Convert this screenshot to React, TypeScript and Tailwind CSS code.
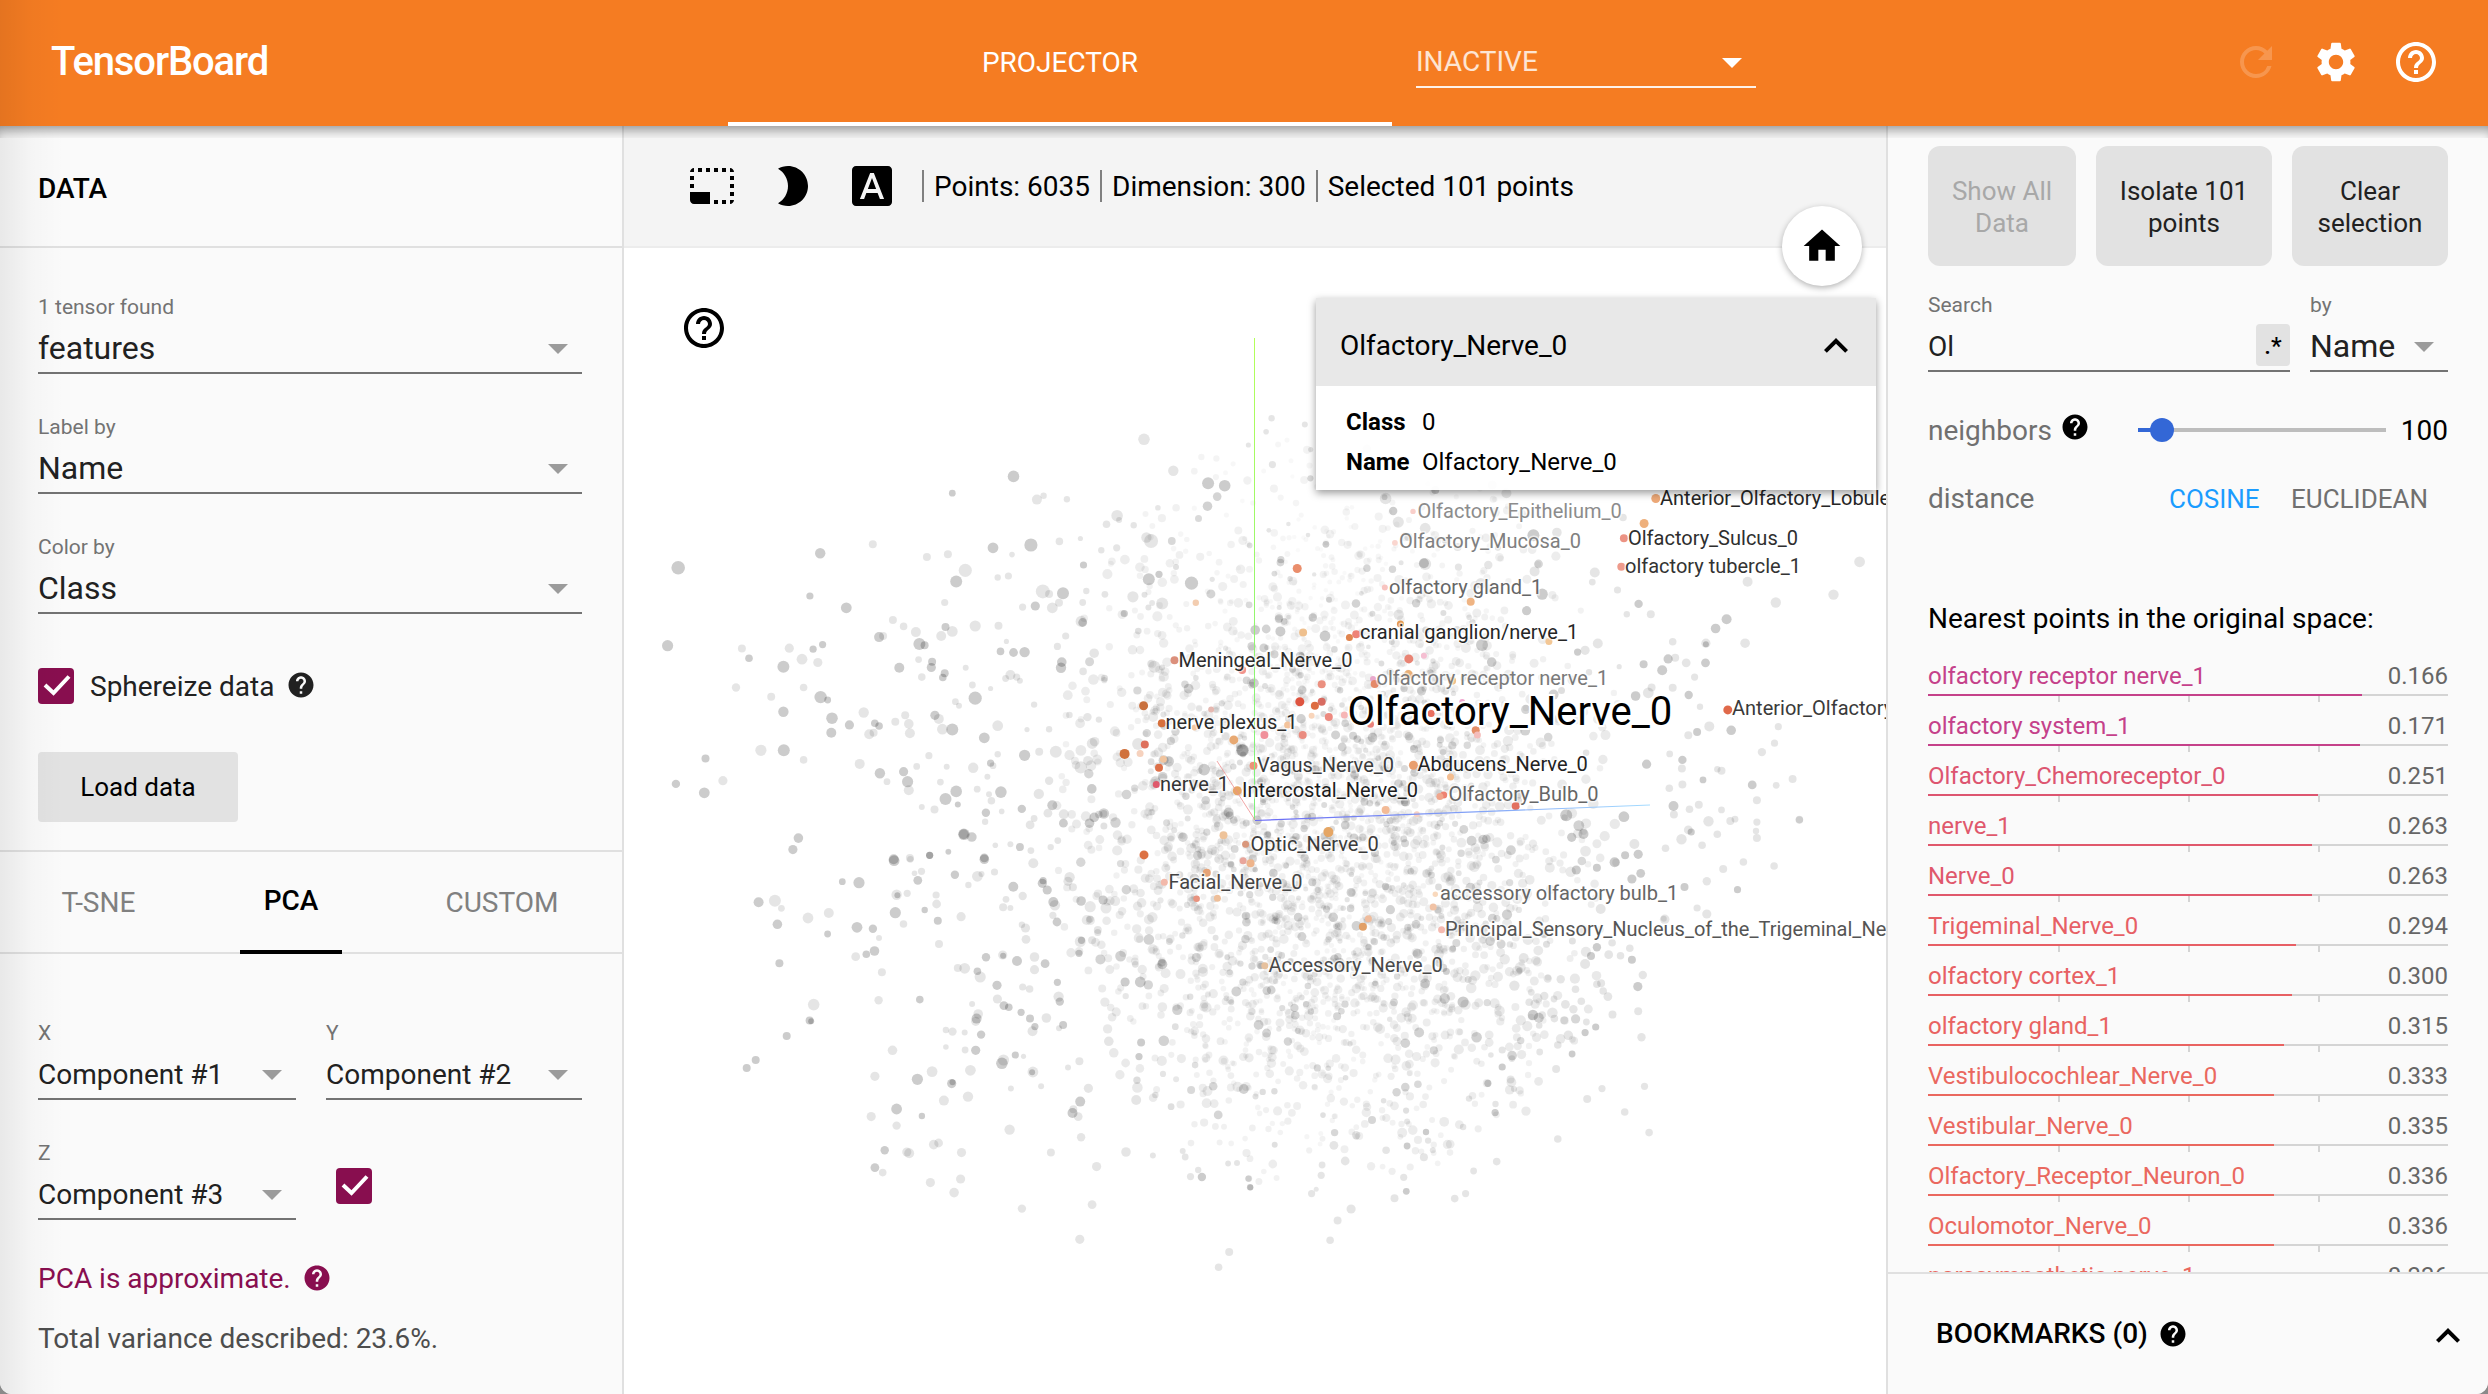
import React from "react";
import {
  MdRefresh,
  MdSettings,
  MdHelpOutline,
  MdHelp,
  MdHome,
  MdExpandLess,
  MdPhotoSizeSelectSmall,
  MdBrightness2,
  MdFontDownload,
} from "react-icons/md";

type Dot = { x: number; y: number; r: number; fill: string; o: number };
type Tile = { ox: number; oy: number; sx: number; sy: number };

const TILE_A: Tile = { ox: 630, oy: 300, sx: 0.3954, sy: 0.3571 };
const TILE_B: Tile = { ox: 630, oy: 830, sx: 0.4082, sy: 0.3333 };
const TILE_C: Tile = { ox: 1240, oy: 280, sx: 0.4209, sy: 0.3571 };
const TILE_D: Tile = { ox: 1240, oy: 800, sx: 0.4209, sy: 0.3333 };

/* Sparse outer points, "x y r" triples; an upper-case D marks the darker ones. */
const grayA =
  "122 750 6.8D,95 968 5.6D,481 709 5.2D,614 684 4,455 829 3.6D,547 862 5.4D,815 541 3.4D,970 494 5.8D,1029 559 5,1046 548 3.2,1105 558 3.2,1014 686 6.6D,918 694 5.4D,1086 676 3.8,966 713 2.8,804 712 4,751 720 4,848 757 6.6,825 788 6D,930 777 3.2,957 773 3.6,796 847 3.6,1044 816 7,1060 823 4,1095 821 6D,1068 862 5.4,1085 848 4,1025 857 4.6D,993 860 3.6,665 896 4,692 914 3.8,723 930 5,787 941 5,815 928 5.4,798 916 4D,873 913 5.6,932 912 4,630 944 5D,640 941 4,732 963 6D,745 967 4D,283 976 4,301 1003 3.8D,403 975 4.6,435 1006 5.4,463 978 3.6D,487 965 3.6D,475 1015 4.6,388 1027 6D,681 1030 5D,730 1007 3.4,764 1013 4D,762 1029 4.6D,738 1056 3.8,796 1045 4D,791 1057 3.8D,849 1030 3,937 984 3.8D,970 987 4.4D,998 986 5.2D,952 956 2.6,268 1085 4.2,357 1111 4,439 1085 3.8,482 1112 6.2D,500 1120 3.4D,388 1153 5.2D,866 1078 3.4,873 1115 6.6D,912 1088 2.6,823 1125 3.4,832 1136 3,962 1050 5,978 1056 3.6,950 1060 3.4,986 1066 3,511 1171 5.8D,555 1190 4.6D,509 1212 5D,591 1155 5.2,619 1185 3.8D,630 1193 3.8D,605 1216 5,616 1212 4,671 1181 4,696 1163 4,705 1187 4.8,708 1213 5,771 1163 4.6D,781 1173 5,790 1202 5.4,815 1203 6D,930 1192 5.4,896 1226 5.4D,331 1261 5.6,389 1261 6D,191 1284 4D,439 1288 3.8,581 1299 5,756 1276 3.6,998 1275 5.6D,930 1272 3.2,235 1346 4.6,116 1355 4.2D,188 1380 5.4D,632 1325 5.2D,692 1321 4.6D,702 1349 5.6D,705 1373 5,650 1349 3.4,725 1306 3.4,801 1307 3,868 1310 5.2,912 1297 3.6D,918 1304 3.4,904 1335 3,785 1350 3.4,798 1397 6D,825 1376 5.8D,829 1413 3D,938 1378 5.8D,908 1384 3,878 1370 3.4,914 1402 3.8,770 1427 4,738 1420 3,900 1436 4.2D,991 1425 4.2D,940 1432 2.8,898 1461 3.2,844 1496 5D,864 1504 5,426 1507 4.8D,412 1539 4.6D,667 1566 5D,708 1563 4,758 1555 3.6D,896 1562 4.4D,805 1545 3,924 1527 2.8,962 1524 3,986 1532 4D,1014 1542 3.4,1012 1470 4.4,1022 1452 3.4,1057 1437 4.4,1068 1415 5D,1097 1440 5,1096 1465 4.4D,1034 1383 5.2,1060 1346 4.2,1077 1265 6,1035 1265 4,1022 1133 3.2,1004 1203 2.6,1060 1202 3.2,1082 1514 3.4,1064 1532 3.2,1300 390 5.8,1374 478 5.2,1462 513 6D,1504 520 5.8D,1232 604 5.8,1237 616 3,1205 628 3.8,1274 631 3.2,1192 701 3.2,1231 694 3.6,1139 668 2.6,1147 742 3.6D,1318 675 7,1306 665 5.2,1312 782 6D,1338 768 3.6D,1272 831 5.6,1346 850 6,1420 793 6.6D,1141 900 5.6,1145 903 4.4D,1154 815 3.2,1145 847 3.4,1201 824 3.4,1174 989 4.8,1146 1040 3.8,1092 1014 4.8D,1090 1030 5.2D,1081 970 3.6,1102 941 3.6,1157 1168 4.2,1186 1175 3.2,1175 1237 4.8,1169 1242 5.4,1158 1290 4.8,1140 1309 6.2,1168 1369 4.8D,1174 1449 4.8D,1162 1465 4.8D,1285 1243 6,1250 878 3.6D,1326 1027 6,1452 1315 5.8D,1549 1261 5.8D";
const grayB =
  "818 13 5.8D,838 21 4.6,315 217 5D,355 212 6,371 235 3.4,361 283 4.8D,436 264 5.4,487 249 5,484 312 3.4D,366 400 4D,450 524 5.8,440 572 4D,444 574 3D,384 618 4D,308 690 4D,286 714 4D,520 155 3.4D,561 158 5.6D,647 92 5.4D,687 88 3.4,734 76 3.6D,714 124 3.6,697 130 2.8,705 151 4.4D,796 134 4.2D,868 88 4.8D,851 139 5.4,861 132 3,829 165 3.2,893 126 3.6,780 65 2.8,653 194 5.2,655 196 3D,679 190 3.6,650 248 5.6D,670 282 3.8,722 240 3.2D,750 195 3.6,751 222 4.4,754 272 4D,811 260 4.6,556 292 5.4D,595 296 4.2D,610 324 3,757 342 4,553 380 4.4,579 373 3.8D,599 363 4.8D,617 427 4,609 511 4.2,710 509 3.8D,643 661 4.8,600 739 4.6,704 748 5.6D,740 725 5.4,788 761 4.6D,790 757 3D,834 721 5.4,828 800 5.2,769 812 5,653 837 5.4D,591 860 4.6,653 887 4.2,715 858 3.2D,624 961 4.2D,600 1013 4.4D,619 1028 3.8,678 966 4.6,684 970 5,744 944 4.8,756 939 4.4,812 968 4.6,736 1058 4.6,810 1047 4.6,794 1088 4.8,930 899 5.2,1031 968 4,960 1136 4.2,1132 1124 4.4,1102 1228 4.6,1143 1010 4.6,1105 922 4.2,1468 1266 4,1442 1312 3.8,939 170 5D,962 198 4.2,921 208 3.4,914 232 4,932 234 3,1010 160 4.6D,1012 152 3.6D,1022 180 4.6D,1037 216 5D,1041 226 5.2,1046 276 4.4D,1105 213 4.8D,1159 210 4.6D,1036 256 3.6,988 100 5,1077 142 5.2,1073 154 4.6,1085 172 4,1106 331 3.6D,1132 331 4,1146 300 4,872 382 4.2D,913 375 4.6,914 377 3D,948 393 5D,991 381 4.8,991 419 4.6,1017 401 4.4D,820 415 5.4,803 414 4,851 424 3.8D,858 441 5.6,899 466 4.6D,1100 370 3.6D,962 471 3.6,979 477 3.8,1047 457 3.6D,1050 500 5.2,1053 515 4.2D,900 507 4.6,838 522 3,916 527 4.4D,928 532 3.8D,958 547 3.6D,980 566 4D,853 552 4.8,849 566 5D,847 574 4.6,992 590 3.6D,986 604 5,1020 564 4.8,1061 585 4D,1051 595 3,774 600 3.2,790 605 4.2,820 608 3,860 614 4.2D,847 661 4.6D,821 660 3.4,774 651 2.8,911 700 5.8D,915 690 5.6,944 675 3.6D,964 679 2.6,987 726 5.4,985 727 3D,933 776 3,1007 769 3,1073 713 3,1101 694 4,1123 775 4.6,1103 815 5D,1084 849 5D,1086 838 4,1098 860 4.4,1173 634 4.8,1215 966 4.8,1250 456 5.4D,1213 456 4.6D,970 328 4.4,969 294 4.6,960 284 3.2,1304 403 5D,1240 810 5,1401 1041 4.2D,1373 1040 3.6,1392 1020 3.2,1281 977 3,1354 963 3,1360 981 3.4,1520 1073 3,1516 1046 3.4,1487 999 3,1252 638 4D,1247 680 3.6D";
const grayC =
  "1472 789 5.4,1206 845 5,1410 881 5.2,1273 903 5.2,1156 950 5D,1130 976 4.8D,1200 1017 4.8,947 907 4.2D,919 936 3.2,976 936 4,843 819 5,837 846 3.4,897 868 3.6,910 665 3.8,1107 1017 4.6,1107 1020 3D,1028 1013 3.8,1017 1061 4.6D,1034 1058 4,1060 1072 4.4,1106 1072 4.4D,959 1076 4D,1003 1093 5D,901 1083 2.6,1080 1112 3.6,940 1165 4.8D,978 1141 4,970 1156 5.4,1028 1142 4,1066 1162 4.2D,1093 1195 3.2,1115 1250 5,1167 1261 4.8D,1086 1266 4D,1065 1275 4,1279 1251 3.6,1270 1297 3.6,1240 1322 4.2,1313 1397 4,1217 1414 4.4D,1274 1415 3.4,1144 1374 4,1134 1370 3.2,1051 1344 4.2D,1050 1368 4,1021 1327 3.4,966 1356 4.6D,1100 1400 3.4D,1228 1457 4,1329 1511 3.8,1144 1484 3.4,1228 1518 3.6,1176 1510 3.4,1051 1413 4,1020 1423 3.8,1030 1473 5,1031 1497 4,1065 1540 4.4,753 707 4.8,697 715 6D,517 748 4,437 793 5D,440 795 6,700 816 5,718 880 5.6D,346 612 5.8,364 647 4.2D,376 678 5.6,440 695 5.4,633 597 5,464 588 4D,400 720 4,204 740 3.4D,572 850 5.4,681 926 4.6D,377 937 5.2,575 1022 6D,598 1070 4.8D,850 1018 5,820 1037 4.6,802 1042 3.6D,6 1317 6.4D,36 980 4.8D,96 984 5D,202 997 5.4D,173 945 4.2D,75 387 3.2,154 405 3,62 425 2.8,77 517 3.6,168 475 2.6,20 462 2.6,590 798 4.2,519 804 3.6";
const grayD =
  "1030 18 5,1090 14 4,1068 28 3.8,1113 64 5.2,1165 63 4,1226 93 3.2,1228 114 4,1072 96 3.6D,1049 118 5.2,1098 136 3.8,1134 103 3.8,1329 60 3.8,1011 145 3.8,1196 186 3.8,1148 207 4,1269 198 3.8,1109 244 4.2,1182 269 3.6D,1056 261 4D,1086 324 3.6,1109 342 4.6,1009 358 4.8,1007 356 3,946 163 4.6D,915 166 4D,890 187 5D,848 203 4D,799 210 4.6D,952 220 4.4D,931 237 4.6D,857 327 5,884 428 3.8,848 442 4.2D,834 468 4D,931 479 4D,926 445 3.8,904 467 3.8,876 464 4.4,820 492 5,957 525 4.2,945 560 4.6D,731 536 4.2,762 538 4.2,797 568 3.8,848 553 3.8,858 550 4,863 573 3.8,874 590 4.4,811 604 3.8,692 577 3.4,723 588 4.2,687 607 3.8,746 597 3.4,773 613 4.4,792 628 4.2,696 645 5.2D,718 645 3.8,747 656 3.8,770 661 4,885 644 4,946 634 4,823 666 3.4,845 681 3.6D,820 698 3.6D,780 706 4.8,954 712 4.2,755 735 3.8,712 756 3.4,789 762 3.4D,751 807 4,623 750 3.6,646 776 3.4,596 765 2.8,623 801 3.6D,643 839 4,651 867 3,589 850 3.6D,961 859 3.6,860 866 3.6,825 897 4,914 936 3.8,607 912 3.2,606 938 3.6D,755 1017 3.8,972 998 3.8,530 981 3.2,544 896 3.2,610 1085 3.8,555 1113 3.4,389 1132 3.6,395 1174 3.4D,367 1195 4,510 1196 3.8,536 1181 3.6,264 1227 4.6,232 1262 4,214 1321 3.8,170 1181 3.6,193 1126 3.6,195 1095 3.4,250 1083 4.4,24 1162 3.2D,20 1136 3.2,437 1072 4,458 1051 3,397 1038 3.4D,347 1051 3.8,223 1036 4.4,276 1006 4.2,442 996 3.2D,447 1022 3.2,397 965 3,816 102 5D,788 112 4.6D,775 46 6D,912 50 5.4D,937 132 5,530 606 5.6D,652 557 5.2,674 474 5";

/* Highlighted points: "x y r colour". */
const hotA =
  "1299 1136 4.5 #c9713f,1345 1185 4 #d6703c,1302 1245 4 #de705c,1251 1271 5 #d0713c,1290 1270 3.5 #f6d2be,1349 1286 3.5 #f0c49e,1338 1310 4 #dd7048,1331 1357 3.5 #df5a6c,1377 1009 4 #db8f7b,1431 848 3.2 #f3cdb0,1527 1232 4.5 #e8a973,1428 1197 3 #f3c7a0,1470 1147 3 #e5b8b0,1536 1374 4.5 #e7a566,1300 1554 4.5 #dc7143,1501 1499 4 #eec39a,1557 1524 3.5 #d9977c";
const hotB =
  "1309 157 3.5 #f3b9aa,1413 128 4 #e6a377,1388 206 3.3 #e8937f,1439 205 3.5 #eebf9a,1502 92 3.5 #e8a59b,1520 100 4 #eeb48b";
const hotC =
  "988 612 4.5 #eda978,960 682 4.5 #eeb07c,912 723 4 #ec9384,906 803 4 #ee9b8c,136 808 4.5 #ea8e6c,411 648 2.7 #f9cfca,368 736 2.9 #fad6cf,344 861 3 #f8c4c0,548 901 4 #efb483,381 963 3.5 #e5994f,276 992 4 #ee8276,260 1001 3.5 #e0854f,150 987 4 #efc08e,734 1012 3.5 #f3c795,401 1061 4.5 #e98474,437 1052 3 #f5bfd2,400 1105 4.5 #e9b078,316 1117 3 #e9a9cc,320 1131 4 #e48968,194 1132 4 #eb9080,142 1181 4.5 #de5440,194 1181 4 #d86c62,178 1192 4 #dd6c42,211 1224 4 #ed8a80,248 1218 3.5 #f6b5b5,170 1220 3 #f8d5bb,310 1244 3.5 #e9827c,454 1214 3.5 #e97060,528 1182 3 #f0a8cf,560 1261 4 #e58f68,564 1274 3.5 #f4bdbb,58 1274 4 #f0909a,149 1274 4 #ea8c80,113 1246 3.5 #f4c49c,32 1360 4 #eb9478,412 1359 4.5 #e99f6e,500 1392 3.5 #f3bd90,484 1442 3.5 #ee8272,475 1446 3.5 #f0a68c,346 1484 4 #f3bb97,655 1473 4 #e2705e,420 1496 3 #f7d1c4,210 1546 5 #e5a665,5 1092 4 #f2938c,1159 1204 4.5 #e0694a,504 1122 4 #eec08b";
const hotD =
  "464 283 2.7 #f9d9bd,459 321 3.5 #f1c3a6,305 356 3.5 #efbc9c,292 380 4 #e2a067,479 389 3.5 #f4bab0,59 497 3.5 #e6c19e";

function grayDots(t: Tile, src: string): Dot[] {
  return src.split(",").map((s) => {
    const dark = s.endsWith("D");
    const [x, y, r] = s.replace("D", "").split(" ").map(Number);
    return { x: t.ox + x * t.sx, y: t.oy + y * t.sy, r, fill: "#000", o: dark ? 0.2 : 0.1 };
  });
}

function hotDots(t: Tile, src: string): Dot[] {
  return src.split(",").map((s) => {
    const [x, y, r, fill] = s.split(" ");
    return { x: t.ox + Number(x) * t.sx, y: t.oy + Number(y) * t.sy, r: Number(r), fill, o: 1 };
  });
}

function cloudDots(): Dot[] {
  let seed = 1337;
  const rnd = () => {
    seed = (seed * 1664525 + 1013904223) >>> 0;
    return seed / 4294967296;
  };
  const gauss = () => Math.sqrt(-2 * Math.log(rnd() + 1e-9)) * Math.cos(2 * Math.PI * rnd());
  const out: Dot[] = [];
  while (out.length < 3600) {
    const x = 1330 + gauss() * 145;
    const y = 825 + gauss() * 195;
    const dx = (x - 1320) / (x < 1320 ? 265 : 310);
    const dy = (y - 820) / (y < 820 ? 400 : 370);
    const rad = Math.abs(dx) ** 2.2 + Math.abs(dy) ** 2.2;
    if (rad > 1 || rnd() < rad * 0.5) continue;
    const side = Math.abs(dx);
    const low = Math.max(0, Math.min(1, (y - 450) / 500));
    const near = rnd();
    const r = 2.1 + near * near * 2.3 + side * 1 + low * 0.4;
    const dark = rnd() < 0.1 + low * 0.04;
    const o = dark ? 0.09 + near * 0.09 : 0.012 + near * 0.035 + side * 0.03 + low * 0.022;
    out.push({ x, y, r, fill: "#000", o });
  }
  return out;
}

const DOTS: Dot[] = [
  ...cloudDots(),
  ...grayDots(TILE_A, grayA),
  ...grayDots(TILE_B, grayB),
  ...grayDots(TILE_C, grayC),
  ...grayDots(TILE_D, grayD),
  ...hotDots(TILE_A, hotA),
  ...hotDots(TILE_B, hotB),
  ...hotDots(TILE_C, hotC),
  ...hotDots(TILE_D, hotD),
];

const LABELS: [number, number, string, string][] = [
  [1417.5, 517.5, "Olfactory_Epithelium_0", "#8c8c8c"],
  [1399, 548, "Olfactory_Mucosa_0", "#808080"],
  [1389, 593.5, "olfactory gland_1", "#666666"],
  [1360, 639, "cranial ganglion/nerve_1", "#262626"],
  [1376.5, 684.5, "olfactory receptor nerve_1", "#7a7a7a"],
  [1660, 504.5, "Anterior_Olfactory_Lobule", "#262626"],
  [1628, 544.5, "Olfactory_Sulcus_0", "#2e2e2e"],
  [1625, 572.5, "olfactory tubercle_1", "#333333"],
  [1732, 715, "Anterior_Olfactory", "#3a3a3a"],
  [1257, 771.5, "Vagus_Nerve_0", "#3a3a3a"],
  [1417.5, 770.5, "Abducens_Nerve_0", "#222222"],
  [1242, 796.5, "Intercostal_Nerve_0", "#1c1c1c"],
  [1448.5, 800.5, "Olfactory_Bulb_0", "#666666"],
  [1178.5, 666.5, "Meningeal_Nerve_0", "#2c2c2c"],
  [1165.5, 728.5, "nerve plexus_1", "#2c2c2c"],
  [1160, 790.5, "nerve_1", "#333333"],
  [1168.5, 888.5, "Facial_Nerve_0", "#444444"],
  [1250.5, 850.5, "Optic_Nerve_0", "#3a3a3a"],
  [1440, 899.5, "accessory olfactory bulb_1", "#666666"],
  [1445, 935.5, "Principal_Sensory_Nucleus_of_the_Trigeminal_Ne", "#555555"],
  [1268.5, 971.5, "Accessory_Nerve_0", "#484848"],
];

function Projection() {
  return (
    <svg className="block h-[1146px] w-[1262px]" viewBox="624 248 1262 1146" fontFamily="Roboto, sans-serif">
      <defs>
        <linearGradient id="yAxis" x1="0" y1="338" x2="0" y2="820" gradientUnits="userSpaceOnUse">
          <stop offset="0" stopColor="#b4ff5a" />
          <stop offset="1" stopColor="#7df07d" />
        </linearGradient>
        <linearGradient id="zAxis" x1="1255" y1="0" x2="1650" y2="0" gradientUnits="userSpaceOnUse">
          <stop offset="0" stopColor="#6a6af5" />
          <stop offset="0.5" stopColor="#7f9cf5" />
          <stop offset="1" stopColor="#a5dcff" />
        </linearGradient>
      </defs>
      {DOTS.map((d, i) => (
        <circle key={i} cx={d.x.toFixed(1)} cy={d.y.toFixed(1)} r={d.r.toFixed(1)} fill={d.fill} fillOpacity={d.o.toFixed(3)} />
      ))}
      <path d="M1254.5 338V820" stroke="url(#yAxis)" strokeWidth="1" />
      <path d="M1255 820.5L1650 805" stroke="url(#zAxis)" strokeWidth="1.1" />
      <path d="M1217 761L1255 820" stroke="#ee8f8f" strokeWidth="0.8" />
      {LABELS.map(([x, y, t, c]) => (
        <text key={t} x={x} y={y} fontSize="20" fill={c} stroke="#fff" strokeOpacity="0.6" strokeWidth="3" paintOrder="stroke">
          {t}
        </text>
      ))}
      <text x="1347.5" y="725" fontSize="40" fill="#000" stroke="#fff" strokeWidth="4" paintOrder="stroke">
        Olfactory_Nerve_0
      </text>
      <circle cx="1431" cy="713.5" r="3" fill="#e97060" />
    </svg>
  );
}

function Arrow({ className = "" }: { className?: string }) {
  return (
    <svg className={"h-[10px] w-5 shrink-0 " + className} viewBox="0 0 20 10">
      <path d="M0 0h20L10 10z" fill="currentColor" />
    </svg>
  );
}

function Field({ label, value, small = false, className = "" }: { label: string; value: string; small?: boolean; className?: string }) {
  return (
    <div className={"h-20 " + className}>
      <div className="h-[26px] text-[21px] leading-[26px] text-[#737373]">{label}</div>
      <div className="flex h-[54px] items-center justify-between border-b-2 border-[#737373] pr-[14px] text-[#212121]">
        <span className={small ? "pt-1.5 text-[28px] leading-9" : "pt-[3px] text-[32px] leading-9"}>{value}</span>
        <Arrow className="mt-1.5 text-[#9b9b9b]" />
      </div>
    </div>
  );
}

function Checkbox({ className = "" }: { className?: string }) {
  return (
    <div className={"flex h-9 w-9 shrink-0 items-center justify-center rounded bg-[#880e4f] " + className}>
      <svg className="h-9 w-9" viewBox="0 0 36 36" fill="none" stroke="#fff" strokeWidth="4">
        <path d="M7 17l8.5 8L31 8.500" />
      </svg>
    </div>
  );
}

function LeftPanel() {
  return (
    <aside className="w-[624px] shrink-0 border-r-2 border-[#e0e0e0] bg-[#fafafa]">
      <div className="flex h-[122px] items-center border-b-2 border-[#e0e0e0] pt-[5px] pl-[38px] text-[28px] font-medium">DATA</div>
      <div className="flex flex-col gap-10 pt-[46px] pr-10 pl-[38px]">
        <Field label="1 tensor found" value="features" />
        <Field label="Label by" value="Name" />
        <Field label="Color by" value="Class" />
      </div>
      <div className="mt-[54px] flex h-9 items-center pl-[38px] text-[#212121]">
        <Checkbox />
        <span className="mt-0.5 ml-4 text-[28px] leading-9">Sphereize data</span>
        <MdHelp className="-mt-0.5 ml-3 h-[30px] w-[30px]" />
      </div>
      <button className="mt-12 ml-[38px] flex h-[70px] w-[200px] items-center justify-center rounded bg-[#e2e2e2] pt-px text-[26px]">Load data</button>
      <div className="mt-7 flex h-[104px] items-stretch justify-between border-y-2 border-[#e0e0e0] text-[28px] leading-[102px] text-[#808080]">
        <span className="w-[200px] pr-[3px] text-center">T-SNE</span>
        <span className="-mb-0.5 h-[102px] w-[102px] border-b-4 border-black text-center leading-[98px] font-medium text-black">PCA</span>
        <span className="w-60 text-center">CUSTOM</span>
      </div>
      <div className="mt-[66px] grid grid-cols-[258px_256px] gap-x-[30px] gap-y-10 pl-[38px]">
        <Field small label="X" value="Component #1" />
        <Field small label="Y" value="Component #2" />
        <Field small label="Z" value="Component #3" />
        <Checkbox className="mt-7 ml-2.5" />
      </div>
      <div className="mt-[41px] flex h-9 items-center pl-[38px] text-[28px] leading-9 text-[#880e4f]">
        PCA is approximate.
        <MdHelp className="-mt-0.5 ml-[11px] h-[30px] w-[30px]" />
      </div>
      <div className="mt-6 h-9 pl-[38px] text-[28px] leading-9 text-[#4d4d4d]">Total variance described: 23.6%.</div>
    </aside>
  );
}

const NEIGHBORS: [string, string, string][] = [
  ["olfactory receptor nerve_1", "0.166", "#c5418a"],
  ["olfactory system_1", "0.171", "#c5418a"],
  ["Olfactory_Chemoreceptor_0", "0.251", "#dd5570"],
  ["nerve_1", "0.263", "#e0586c"],
  ["Nerve_0", "0.263", "#e0586c"],
  ["Trigeminal_Nerve_0", "0.294", "#e75f65"],
  ["olfactory cortex_1", "0.300", "#e76063"],
  ["olfactory gland_1", "0.315", "#e96361"],
  ["Vestibulocochlear_Nerve_0", "0.333", "#ea685f"],
  ["Vestibular_Nerve_0", "0.335", "#ea685f"],
  ["Olfactory_Receptor_Neuron_0", "0.336", "#ea685f"],
  ["Oculomotor_Nerve_0", "0.336", "#ea685f"],
  ["parasympathetic nerve_1", "0.336", "#ea685f"],
];

function NeighborRow({ name, dist, color }: { name: string; dist: string; color: string }) {
  const width = Math.round((1 - Number(dist)) * 260) * 2;
  return (
    <div className="h-[50px] shrink-0">
      <div className="flex h-[42px] items-center justify-between pt-[5px] text-[24px] leading-8">
        <span style={{ color }}>{name}</span>
        <span className="text-[#666]">{dist}</span>
      </div>
      <div className="h-0.5 bg-[#d4d4d4]">
        <div className="h-0.5" style={{ width, background: color }} />
      </div>
      <div className="grid h-1.5 grid-cols-4">
        <span />
        <span className="border-l-2 border-[#d4d4d4]" />
        <span className="border-l-2 border-[#d4d4d4]" />
        <span className="border-l-2 border-[#d4d4d4]" />
      </div>
    </div>
  );
}

function RightPanel() {
  return (
    <aside className="flex w-[602px] shrink-0 flex-col border-l-2 border-[#e0e0e0] bg-[#fafafa]">
      <div className="flex min-h-0 flex-1 flex-col overflow-hidden pr-10 pl-10">
        <div className="mt-5 flex shrink-0 gap-5 text-[26px] leading-8 text-[#212121]">
          <button className="h-[120px] w-[148px] rounded-xl bg-[#e2e2e2] pt-0.5 text-[#a8a8a8]">Show All<br />Data</button>
          <button className="h-[120px] w-[176px] rounded-xl bg-[#e2e2e2] pt-0.5">Isolate 101<br />points</button>
          <button className="h-[120px] w-[156px] rounded-xl bg-[#e2e2e2] pt-0.5">Clear<br />selection</button>
        </div>
        <div className="mt-[26px] flex shrink-0 gap-5">
          <div className="h-20 w-[362px]">
            <div className="h-[26px] text-[21px] leading-[26px] text-[#737373]">Search</div>
            <div className="flex h-[54px] items-center justify-between border-b-2 border-[#737373] text-[28px] text-[#212121]">
              <span className="pt-1.5">Ol</span>
              <span className="mt-0.5 flex h-[42px] w-[34px] items-center justify-center rounded bg-[#e2e2e2] pt-0.5 text-[24px] font-medium text-black">.*</span>
            </div>
          </div>
          <Field className="w-[138px]" label="by" value="Name" />
        </div>
        <div className="mt-[38px] flex h-10 shrink-0 items-center text-[28px]">
          <span className="w-[124px] pt-0.5 text-[#707070]">neighbors</span>
          <MdHelp className="-mt-1.5 ml-2 h-[30px] w-[30px]" />
          <div className="relative ml-12 h-1 w-[248px] bg-[#bdbdbd]">
            <div className="h-1 w-6 bg-[#3367d6]" />
            <div className="absolute -top-2.5 left-3 h-6 w-6 rounded-full bg-[#3367d6]" />
          </div>
          <span className="ml-auto pt-0.5">100</span>
        </div>
        <div className="mt-7 flex h-10 shrink-0 items-center pt-0.5 text-[26px] text-[#707070]">
          <span className="w-[241px] text-[28px]">distance</span>
          <span className="w-[122px] text-[#1a9cff]">COSINE</span>
          <span>EUCLIDEAN</span>
        </div>
        <div className="mt-[81px] h-10 shrink-0 text-[28px] leading-10">Nearest points in the original space:</div>
        <div className="mt-[13px] flex shrink-0 flex-col">
          {NEIGHBORS.map(([n, d, c]) => (
            <NeighborRow key={n} name={n} dist={d} color={c} />
          ))}
        </div>
      </div>
      <div className="flex h-[122px] shrink-0 items-center border-t-2 border-[#e0e0e0] pr-4 pl-12 text-[28px] font-medium">
        BOOKMARKS (0)
        <MdHelp className="ml-[10px] h-[30px] w-[30px]" />
        <MdExpandLess className="mt-1 ml-auto h-12 w-12" />
      </div>
    </aside>
  );
}

function Center() {
  return (
    <main className="relative flex w-[1262px] shrink-0 flex-col overflow-hidden bg-white">
      <div className="flex h-[122px] shrink-0 items-center border-b-2 border-[#ececec] bg-[#f4f4f4] pl-16 text-[28px]">
        <div className="flex gap-8">
          <MdPhotoSizeSelectSmall className="h-12 w-12" />
          <MdBrightness2 className="h-12 w-12" />
          <MdFontDownload className="h-12 w-12" />
        </div>
        <span className="ml-[26px] h-8 w-0.5 bg-[#808080]" />
        <span className="ml-[10px] pt-0.5">Points: 6035</span>
        <span className="ml-[10px] h-8 w-0.5 bg-[#808080]" />
        <span className="ml-[10px] pt-0.5">Dimension: 300</span>
        <span className="ml-[10px] h-8 w-0.5 bg-[#808080]" />
        <span className="ml-[10px] pt-0.5">Selected 101 points</span>
      </div>
      <Projection />
      <MdHelpOutline className="absolute top-[178px] left-14 h-12 w-12" />
      <div className="absolute top-20 right-6 flex h-20 w-20 items-center justify-center rounded-full bg-white shadow-[0_2px_6px_rgba(0,0,0,0.3)]">
        <MdHome className="h-11 w-11" />
      </div>
      <div className="absolute top-[172px] right-[10px] w-[560px] bg-white/95 shadow-[0_3px_8px_rgba(0,0,0,0.4)]">
        <div className="flex h-[88px] items-center justify-between bg-[#e8e8e8] pt-2 pr-4 pl-6 text-[28px]">
          Olfactory_Nerve_0
          <MdExpandLess className="h-12 w-12" />
        </div>
        <div className="grid h-[104px] grid-cols-[76px_1fr] content-start pt-4 pl-[30px] text-[24px] leading-10">
          <span className="font-bold">Class</span>
          <span>0</span>
          <span className="font-bold">Name</span>
          <span>Olfactory_Nerve_0</span>
        </div>
      </div>
    </main>
  );
}

function Header() {
  return (
    <header className="flex h-[126px] items-center bg-[#f57c22] pb-0.5 text-white">
      <div className="w-[728px] pl-[51px] text-[40px] font-medium tracking-[-0.028em]">TensorBoard</div>
      <div className="flex h-[126px] w-[664px] items-center justify-center self-start border-b-4 border-white pt-[3px] text-[28px]">PROJECTOR</div>
      <div className="ml-6 flex h-[52px] w-[340px] items-center justify-between border-b-2 border-white/90 pt-0.5 pr-[14px] text-[28px]">
        <span className="text-white/80">INACTIVE</span>
        <Arrow className="mt-0.5" />
      </div>
      <div className="ml-auto flex gap-8 pr-12">
        <MdRefresh className="h-12 w-12 opacity-20" />
        <MdSettings className="h-12 w-12" />
        <MdHelpOutline className="h-12 w-12" />
      </div>
    </header>
  );
}

export default function App() {
  return (
    <div className="h-[1394px] w-[2488px] overflow-hidden bg-[#8a8a8a] font-['Roboto',sans-serif] text-black">
      <div className="relative h-full overflow-hidden rounded-b-[12px] bg-[#fafafa]">
        <Header />
        <div className="relative flex h-[1268px]">
          <LeftPanel />
          <Center />
          <RightPanel />
          <div className="pointer-events-none absolute inset-x-0 top-0 h-3 shadow-[inset_0_10px_12px_-6px_rgba(0,0,0,0.4)]" />
        </div>
        <div className="pointer-events-none absolute inset-y-0 left-0 w-16 bg-gradient-to-r from-black/7 via-black/2 to-transparent" />
      </div>
    </div>
  );
}
